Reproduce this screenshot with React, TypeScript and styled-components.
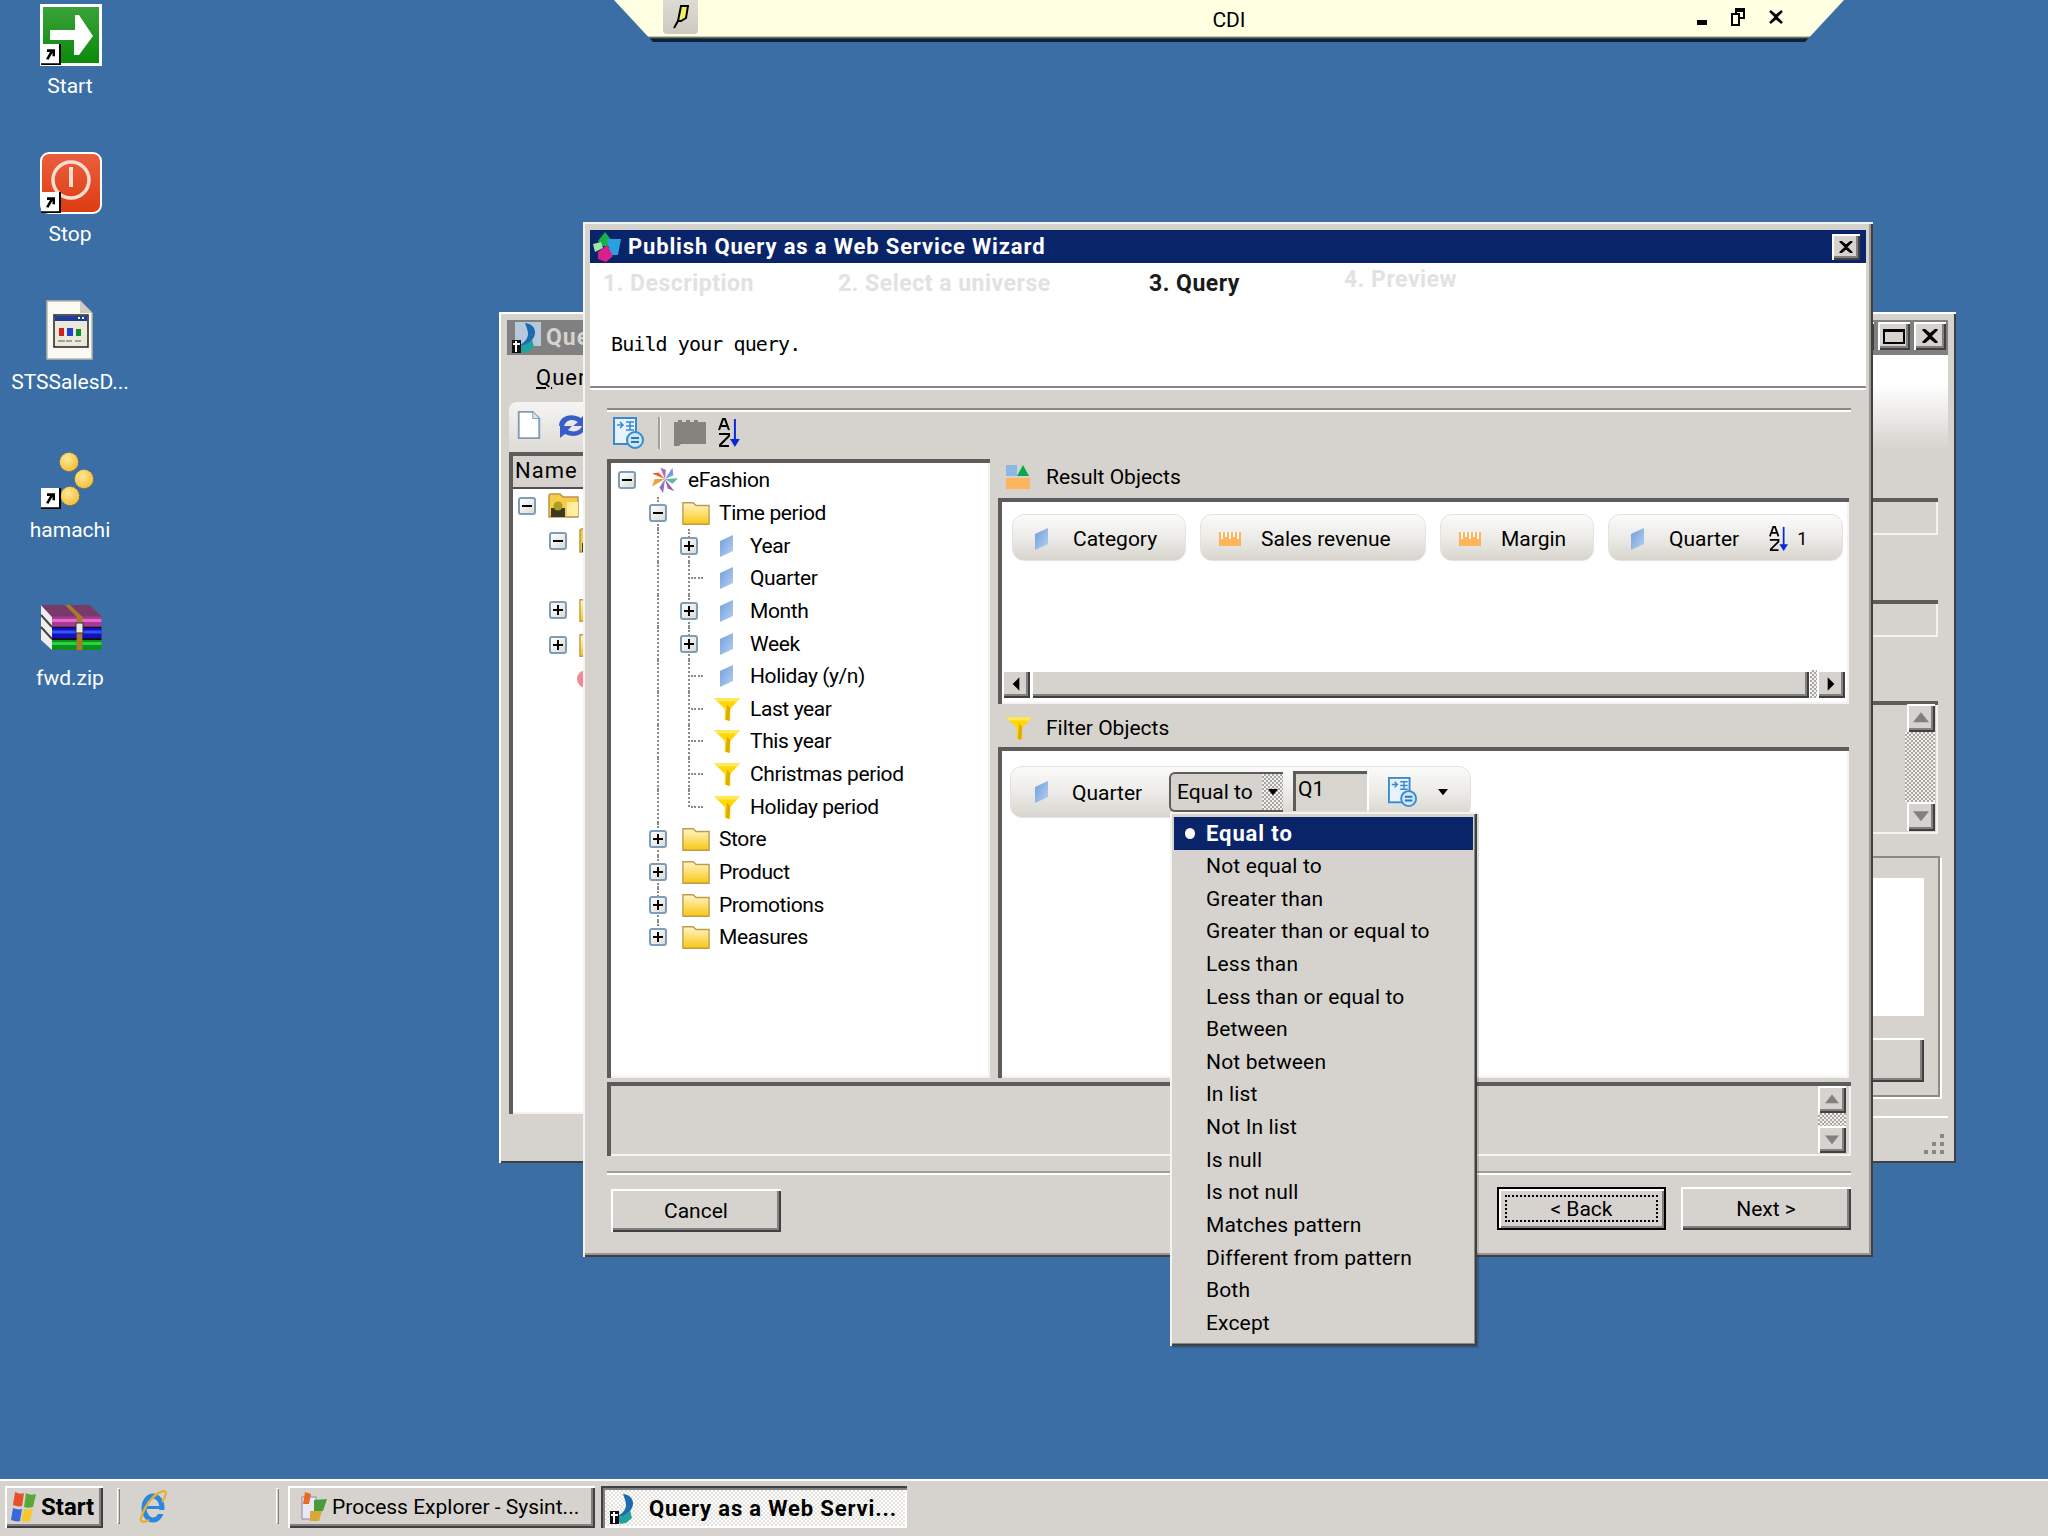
import React from "react";
import styled, { createGlobalStyle, css } from "styled-components";

const face = '#d6d3ce';
const navy = '#0a246a';
const uiFont = 'Roboto, "Liberation Sans", Arial, sans-serif';

const GlobalStyle = createGlobalStyle`
  html, body { margin: 0; padding: 0; background: #3a6ea5; }
  * { box-sizing: border-box; }
`;

const raised = css`
  background-color: ${face};
  box-shadow: inset 2px 2px 0 #fff, inset -2px -2px 0 #404040, inset -4px -4px 0 #808080;
`;
const sunken = css`
  box-shadow: inset 4px 4px 0 #5c5c5a, inset -2px -2px 0 #f4f3f0;
`;
const checker = css`
  background: repeating-conic-gradient(#a8a6a0 0 25%, #f2f1ee 0 50%) 0 0 / 4px 4px;
`;

const Desktop = styled.div`
  position: relative;
  width: 2048px;
  height: 1536px;
  overflow: hidden;
  background: #3a6ea5;
  font-family: ${uiFont};
  font-size: 21px;
  color: #000;
  display: flex;
  flex-direction: column;
`;
const IconColumn = styled.div`
  flex: 1;
  width: 140px;
  padding-top: 4px;
`;
const IconCell = styled.div`
  height: 148px;
  display: flex;
  flex-direction: column;
  align-items: center;
`;
const IconSlot = styled.div`
  position: relative;
  width: 64px;
  height: 70px;
`;
const IconLabel = styled.div`
  color: #fff;
  font-size: 21px;
  line-height: 24px;
  white-space: nowrap;
`;
const ShortcutBadge = styled.svg`
  position: absolute;
  left: 3px;
  top: 40px;
`;

/* small pale bar docked on top of the screen */
const CdiBar = styled.div`
  position: absolute;
  left: 614px;
  top: 0;
  width: 1230px;
  height: 42px;
  clip-path: polygon(0 0, 100% 0, calc(100% - 39px) 100%, 39px 100%);
  background: linear-gradient(#ffffe1 36px, #8c8c80 37px, #0e2238 39px);
  display: grid;
  grid-template-columns: 1fr auto 1fr;
  align-items: start;
`;
const PinButton = styled.div`
  margin-left: 49px;
  width: 35px;
  height: 34px;
  border-radius: 0 0 4px 4px;
  background: linear-gradient(#dddbd2, #cbc9c0);
  display: flex;
  align-items: center;
  justify-content: center;
`;
const CdiTitle = styled.div`
  font-size: 21px;
  line-height: 40px;
`;
const CdiControls = styled.div`
  display: flex;
  justify-content: flex-end;
  align-items: center;
  gap: 24px;
  height: 34px;
  padding-right: 61px;
`;
const MinimizeMark = styled.svg`
  margin-top: 10px;
`;

/* windows on the desktop */
const BackWindow = styled.div`
  position: absolute;
  left: 499px;
  top: 312px;
  width: 1457px;
  height: 851px;
  padding: 8px;
  display: flex;
  flex-direction: column;
  background: ${face};
  box-shadow: inset 2px 2px 0 #fff, inset -2px -2px 0 #404040;
`;
const BackTitle = styled.div`
  height: 35px;
  flex: none;
  background: #808080;
  color: ${face};
  font-weight: 700;
  font-size: 23px;
  letter-spacing: 1px;
  display: flex;
  align-items: center;
  gap: 3px;
  padding-left: 4px;
`;
const BackButtons = styled.div`
  margin-left: auto;
  display: flex;
  gap: 4px;
  padding: 0 2px 3px 0;
`;
const CapButton = styled.div`
  ${raised};
  width: 32px;
  height: 28px;
  display: flex;
  align-items: center;
  justify-content: center;
`;
const BackBody = styled.div`
  flex: 1;
  display: grid;
  grid-template-columns: 900px 1fr;
  min-height: 0;
`;
const BackLeft = styled.div`
  display: flex;
  flex-direction: column;
  padding-bottom: 42px;
`;
const BackMenu = styled.div`
  height: 47px;
  padding: 9px 0 0 29px;
  font-size: 22px;
  letter-spacing: 1px;
  line-height: 28px;
  u { text-decoration: underline; }
`;
const BackToolbar = styled.div`
  height: 50px;
  margin-left: 2px;
  border-radius: 8px 0 0 0;
  background: linear-gradient(#f6f5f3, #dedbd6);
  display: flex;
  align-items: center;
  gap: 14px;
  padding: 0 0 4px 8px;
`;
const BackTree = styled.div`
  flex: 1;
  margin-left: 2px;
  background: #fff;
  ${sunken};
  padding: 4px 0 0 4px;
`;
const BackHeader = styled.div`
  height: 33px;
  background: ${face};
  border-bottom: 2px solid #505050;
  padding-left: 2px;
  font-size: 22px;
  letter-spacing: 1px;
  line-height: 30px;
`;
const BackRow = styled.div<{ $depth: number }>`
  height: 34.6px;
  display: flex;
  align-items: center;
  gap: 12px;
  padding-left: ${(p) => 5 + p.$depth * 31}px;
`;
const PinkBlob = styled.svg`
  margin-left: 26px;
`;
const BackRight = styled.div`
  display: flex;
  flex-direction: column;
  padding-right: 10px;
`;
const FadePanel = styled.div`
  height: 95px;
  margin-right: -10px;
  background: linear-gradient(#fff 30%, ${face} 100%);
  flex: none;
`;
const SunkenField = styled.div<{ $gap: number }>`
  flex: none;
  height: 37px;
  margin-top: ${(p) => p.$gap}px;
  ${sunken};
`;
const ScrollPanel = styled.div`
  flex: none;
  height: 133px;
  margin-top: 64px;
  ${sunken};
  padding: 3px 3px 3px 0;
  display: flex;
  flex-direction: column;
  align-items: flex-end;
`;
const Stipple = styled.div`
  ${checker};
  flex: 1;
  width: 30px;
`;
const GroupBox = styled.div`
  flex: none;
  height: 241px;
  margin: 22px -2px 0 0;
  border: 2px solid #8c8a86;
  box-shadow: 2px 2px 0 #fff;
  padding: 20px 14px 0 0;
  display: flex;
  flex-direction: column;
`;
const WhitePane = styled.div`
  height: 138px;
  background: #fff;
`;
const GroupButton = styled.div`
  ${raised};
  height: 44px;
  margin-top: 22px;
`;
const BackRule = styled.div`
  margin: 19px -10px 0 0;
  border-top: 2px solid #fff;
`;
const Grip = styled.div`
  display: flex;
  justify-content: flex-end;
  padding: 14px 0 0 0;
  margin-right: -8px;
`;

const Wizard = styled.div`
  position: absolute;
  left: 583px;
  top: 222px;
  width: 1290px;
  height: 1035px;
  padding: 8px 7px;
  display: flex;
  flex-direction: column;
  background: ${face};
  box-shadow: inset 2px 2px 0 #f4f3f0, inset -2px -2px 0 #404040, inset -4px -4px 0 #9a9894;
`;
const TitleBar = styled.div`
  height: 33px;
  flex: none;
  background: ${navy};
  color: #fff;
  display: flex;
  align-items: center;
  padding: 0 6px 0 1px;
`;
const TitleText = styled.div`
  font-weight: 700;
  font-size: 22px;
  margin-left: 7px;
  letter-spacing: 0.85px;
`;
const CloseButton = styled.div`
  ${raised};
  margin-left: auto;
  width: 28px;
  height: 26px;
  display: flex;
  align-items: center;
  justify-content: center;
`;
const Header = styled.div`
  height: 125px;
  flex: none;
  background: #fff;
  border-bottom: 2px solid #8a8884;
  box-shadow: 0 2px 0 #fff;
`;
const Steps = styled.div`
  display: flex;
  padding: 5px 0 0 13px;
`;
const Step = styled.div<{ $w: number; $on?: boolean; $up?: boolean }>`
  width: ${(p) => p.$w}px;
  font-weight: 700;
  font-size: 23px;
  letter-spacing: 0.5px;
  line-height: 32px;
  color: ${(p) => (p.$on ? '#1a1a1a' : '#e2e2e2')};
  transform: ${(p) => (p.$up ? 'translateY(-4px)' : 'none')};
`;
const Prompt = styled.div`
  margin: 30px 0 0 21px;
  font-family: "DejaVu Sans Mono", "Liberation Mono", monospace;
  font-size: 20px;
  line-height: 28px;
  letter-spacing: -0.9px;
`;
const Body = styled.div`
  flex: 1;
  min-height: 0;
  padding: 20px 15px 0 17px;
  display: flex;
  flex-direction: column;
`;
const Etched = styled.div`
  flex: none;
  height: 4px;
  border-top: 2px solid #8c8a86;
  border-bottom: 2px solid #fff;
`;
const Toolbar = styled.div`
  flex: none;
  height: 47px;
  display: flex;
  align-items: center;
  padding: 0 0 5px 6px;
  gap: 11px;
`;
const ToolDivider = styled.div`
  width: 2px;
  height: 32px;
  margin: 0 2px;
  background: #a09e98;
  box-shadow: 1px 0 0 #fff;
`;
const MainGrid = styled.div`
  flex: none;
  height: 619px;
  display: grid;
  grid-template-columns: 383px 851px;
  column-gap: 8px;
`;
const TreePanel = styled.div`
  background: #fff;
  ${sunken};
  padding: 5px 4px;
`;
const TreeRow = styled.div<{ $depth: number }>`
  position: relative;
  height: 32.65px;
  display: flex;
  align-items: center;
  padding-left: ${(p) => 4 + p.$depth * 31}px;
`;
const Guide = styled.span<{ $depth: number; $last?: boolean }>`
  position: absolute;
  left: ${(p) => 15 + p.$depth * 31}px;
  top: 0;
  height: ${(p) => (p.$last ? '50%' : '100%')};
  border-left: 2px dotted #8a8a8a;
`;
const ToggleSlot = styled.span`
  position: relative;
  width: 36px;
  height: 18px;
  flex: none;
  display: flex;
  align-items: center;
  padding-left: 3px;
`;
const Stub = styled.span`
  position: absolute;
  left: 14px;
  top: 8px;
  width: 12px;
  border-top: 2px dotted #8a8a8a;
`;
const ToggleBox = styled.span`
  position: relative;
  z-index: 1;
  flex: none;
  width: 18px;
  height: 18px;
  background: linear-gradient(135deg, #fff, #dcdcd4);
  border: 2px solid #7f9db9;
  border-radius: 3px;
  display: flex;
  align-items: center;
  justify-content: center;
`;
const IconBox = styled.span`
  width: 28px;
  flex: none;
  display: flex;
  align-items: center;
  justify-content: center;
`;
const RowLabel = styled.span`
  margin-left: 9px;
  white-space: nowrap;
  letter-spacing: -0.4px;
`;
const RightCol = styled.div`
  display: flex;
  flex-direction: column;
`;
const SectionHead = styled.div<{ $h: number; $top?: number; $bottom?: number }>`
  height: ${(p) => p.$h}px;
  flex: none;
  display: flex;
  align-items: center;
  padding: ${(p) => p.$top ?? 0}px 0 ${(p) => p.$bottom ?? 0}px 8px;
`;
const SectionLabel = styled.span<{ $lead: number }>`
  margin-left: ${(p) => p.$lead}px;
`;
const ResultBox = styled.div`
  height: 206px;
  flex: none;
  background: #fff;
  ${sunken};
  padding: 16px 4px 6px 4px;
  display: flex;
  flex-direction: column;
`;
const ChipRow = styled.div`
  flex: 1;
  display: flex;
  gap: 14px;
  padding-left: 10px;
  align-items: flex-start;
`;
const Chip = styled.div<{ $w: number }>`
  width: ${(p) => p.$w}px;
  height: 47px;
  flex: none;
  display: flex;
  align-items: center;
  padding-top: 2px;
  border: 1px solid #e4e2dc;
  border-radius: 12px;
  background: linear-gradient(#fbfbfa 0%, #ecebe7 50%, #d8d5ce 100%);
`;
const ChipIcon = styled.span`
  width: 60px;
  flex: none;
  display: flex;
  justify-content: center;
  padding-right: 2px;
`;
const SortMark = styled.span`
  margin-left: 30px;
  display: flex;
  align-items: center;
  gap: 9px;
  font-size: 18px;
`;
const HScroll = styled.div`
  flex: none;
  height: 28px;
  display: flex;
`;
const ArrowButton = styled.div<{ $w?: number; $h?: number }>`
  ${raised};
  flex: none;
  width: ${(p) => p.$w ?? 28}px;
  height: ${(p) => p.$h ?? 28}px;
  display: flex;
  align-items: center;
  justify-content: center;
`;
const Thumb = styled.div`
  ${raised};
  flex: 1;
  margin: 0 1px;
`;
const ScrollGap = styled.div`
  ${checker};
  width: 7px;
  flex: none;
`;
const FilterBox = styled.div`
  flex: 1;
  background: #fff;
  ${sunken};
  padding: 19px 4px 4px 12px;
`;
const FilterChip = styled.div`
  width: 461px;
  height: 52px;
  display: flex;
  align-items: flex-start;
  border: 1px solid #e4e2dc;
  border-radius: 12px;
  background: linear-gradient(#fbfbfa 0%, #ecebe7 50%, #d8d5ce 100%);
`;
const FilterName = styled.span`
  width: 97px;
  flex: none;
  line-height: 52px;
`;
const FilterIcon = styled.span`
  width: 61px;
  height: 50px;
  flex: none;
  display: flex;
  align-items: center;
  justify-content: center;
`;
const SelectWrap = styled.div`
  position: relative;
  flex: none;
  width: 114px;
  height: 40px;
  margin: 5px 10px 0 0;
  display: flex;
  align-items: center;
  padding-left: 6px;
  background: ${face};
  border: 2px solid #5c5c5a;
  border-radius: 6px 0 0 6px;
  border-right-width: 0;
`;
const SelectButton = styled.span`
  ${checker};
  position: absolute;
  right: 0;
  top: 0;
  bottom: 0;
  width: 21px;
  display: flex;
  align-items: center;
  justify-content: center;
`;
const ValueInput = styled.div`
  width: 76px;
  height: 40px;
  margin-top: 4px;
  flex: none;
  padding: 0 0 0 5px;
  line-height: 36px;
  background: #d8d5ce;
  box-shadow: inset 3px 3px 0 #5c5c5a;
  border-right: 2px solid #fff;
`;
const ValueTools = styled.div`
  display: flex;
  align-items: center;
  height: 50px;
  padding-left: 19px;
  gap: 20px;
`;
const Menu = styled.div`
  position: absolute;
  z-index: 5;
  left: -1px;
  top: 38px;
  width: 307px;
  height: 534px;
  padding: 5px 4px;
  background: ${face};
  box-shadow: inset 2px 2px 0 #f4f3f0, inset -2px -2px 0 #404040, inset -3px -3px 0 #8a8884, 2px 2px 0 rgba(0, 0, 0, 0.15);
`;
const MenuItem = styled.div<{ $on?: boolean }>`
  position: relative;
  height: 32.65px;
  padding-left: 32px;
  display: flex;
  align-items: center;
  white-space: nowrap;
  letter-spacing: 0.15px;
  ${(p) =>
    p.$on &&
    css`
      background: ${navy};
      color: #fff;
      font-weight: 700;
      font-size: 22px;
      letter-spacing: 0.9px;
    `}
`;
const MenuDot = styled.span`
  position: absolute;
  left: 11px;
  top: 11px;
  width: 10px;
  height: 11px;
  border-radius: 50%;
  background: #fff;
`;
const DescPanel = styled.div`
  flex: none;
  height: 74px;
  margin-top: 4px;
  ${sunken};
  display: flex;
  flex-direction: column;
  align-items: flex-end;
  padding: 4px 5px 3px 0;
`;
const MiniStipple = styled.div`
  ${checker};
  flex: 1;
  width: 28px;
`;
const FooterRule = styled.div`
  flex: none;
  margin-top: 15px;
  height: 4px;
  border-top: 2px solid #a09e98;
  border-bottom: 2px solid #fff;
`;
const Footer = styled.div`
  flex: 1;
  display: flex;
  align-items: flex-start;
  justify-content: space-between;
  padding: 14px 0 0 4px;
`;
const FooterRight = styled.div`
  display: flex;
  gap: 15px;
  margin-top: -2px;
`;
const PushButton = styled.div<{ $focus?: boolean }>`
  ${raised};
  position: relative;
  width: ${(p) => (p.$focus ? 169 : 170)}px;
  height: 43px;
  display: flex;
  align-items: center;
  justify-content: center;
  ${(p) =>
    p.$focus &&
    css`
      border: 2px solid #000;
      box-shadow: inset 2px 2px 0 #fff, inset -2px -2px 0 #808080;
      &::after {
        content: "";
        position: absolute;
        inset: 6px;
        border: 2px dotted #000;
      }
    `}
`;

const Taskbar = styled.div`
  flex: none;
  position: relative;
  height: 57px;
  background: ${face};
  border-top: 2px solid #fff;
  padding: 5px 0 0 5px;
  display: flex;
  align-items: flex-start;
`;
const StartButton = styled.div`
  ${raised};
  width: 98px;
  height: 42px;
  display: flex;
  align-items: center;
  gap: 3px;
  padding-left: 5px;
  font-weight: 700;
  font-size: 24px;
`;
const BarDivider = styled.div<{ $gap: number }>`
  width: 3px;
  height: 36px;
  margin: 2px 0 0 ${(p) => p.$gap}px;
  background: ${face};
  box-shadow: inset 1px 1px 0 #fff, inset -1px -1px 0 #808080;
`;
const QuickLaunch = styled.div`
  width: 156px;
  height: 42px;
  padding-left: 19px;
  display: flex;
  align-items: center;
`;
const TaskButton = styled.div<{ $active?: boolean }>`
  width: ${(p) => (p.$active ? 306 : 307)}px;
  height: 42px;
  margin-left: ${(p) => (p.$active ? 6 : 9)}px;
  display: flex;
  align-items: center;
  gap: ${(p) => (p.$active ? 8 : 4)}px;
  padding-left: 8px;
  white-space: nowrap;
  ${(p) =>
    p.$active
      ? css`
          font-weight: 700;
          font-size: 22px;
          letter-spacing: 0.85px;
          padding-top: 3px;
          background: repeating-conic-gradient(#fff 0 25%, #e4e2dc 0 50%) 0 0 / 4px 4px;
          box-shadow: inset 2px 2px 0 #404040, inset 4px 4px 0 #808080, inset -2px -2px 0 #fff;
        `
      : raised}
`;

/* drawings */
const ShortcutArrow = () => (
  <ShortcutBadge width="20" height="21" viewBox="0 0 20 24" preserveAspectRatio="none">
    <rect width="20" height="24" fill="#000" />
    <rect x="0" y="0" width="18" height="22" fill="#fff" />
    <path d="M6 6h8v8h-2.5v-4l-4 8-2.5-1 4-8H6z" fill="#000" />
  </ShortcutBadge>
);
const StartIcon = () => (
  <svg width="64" height="64" viewBox="0 0 64 64">
    <defs>
      <linearGradient id="startG" x1="0" y1="0" x2="0" y2="1">
        <stop offset="0" stopColor="#3aa23a" />
        <stop offset="1" stopColor="#0a8a0a" />
      </linearGradient>
    </defs>
    <rect x="2" y="0" width="62" height="62" fill="#fff" />
    <rect x="5" y="3" width="56" height="56" fill="url(#startG)" />
    <path d="M12 26h25V11h4l14 21-14 19h-5V36H12z" fill="#fff" />
  </svg>
);
const StopIcon = () => (
  <svg width="64" height="64" viewBox="0 0 64 64">
    <defs>
      <linearGradient id="stopG" x1="0" y1="0" x2="0" y2="1">
        <stop offset="0" stopColor="#ea5f3e" />
        <stop offset="1" stopColor="#dd3c10" />
      </linearGradient>
    </defs>
    <rect x="3" y="1" width="60" height="60" rx="8" fill="url(#stopG)" stroke="#fff" strokeWidth="2" />
    <circle cx="33" cy="28" r="18" fill="none" stroke="#f6ddd4" strokeWidth="3.5" />
    <rect x="31" y="15" width="4" height="20" fill="#f6ddd4" />
  </svg>
);
const DocIcon = () => (
  <svg width="64" height="64" viewBox="0 0 64 64">
    <path d="M9 1h33l12 12v46H9z" fill="#fbfaf2" stroke="#b8b6aa" strokeWidth="1.5" />
    <path d="M42 1v12h12z" fill="#cfccc4" />
    <rect x="16" y="15" width="34" height="32" fill="#ece9d8" stroke="#222" strokeWidth="1.5" />
    <rect x="17" y="16" width="32" height="5" fill="#1f3c9a" />
    <path d="M40 18h2M44 18h2" stroke="#fff" strokeWidth="2" />
    <rect x="21" y="28" width="5" height="8" fill="#d02020" />
    <rect x="29" y="28" width="6" height="8" fill="#2040d8" />
    <rect x="38" y="29" width="5" height="7" fill="#108a30" />
    <path d="M20 41h7M28 41h6M37 41h6" stroke="#888" strokeWidth="1.5" />
  </svg>
);
const Ball = ({ x, y }: { x: number; y: number }) => (
  <circle cx={x} cy={y} r="9.5" fill="url(#ballG)" stroke="#6a6a58" strokeWidth="1" strokeDasharray="2 1.5" />
);
const HamachiIcon = () => (
  <svg width="64" height="64" viewBox="0 0 64 64">
    <defs>
      <radialGradient id="ballG" cx="0.4" cy="0.35" r="0.8">
        <stop offset="0" stopColor="#ffe89a" />
        <stop offset="1" stopColor="#f2b51e" />
      </radialGradient>
    </defs>
    <Ball x={31} y={14} />
    <Ball x={46} y={31} />
    <Ball x={32} y={48} />
  </svg>
);
const RarIcon = () => (
  <svg width="64" height="64" viewBox="0 0 64 64">
    <path d="M3 9l11 12v33L3 44z" fill="#efeeec" />
    <path d="M3 19l11 12M3 31l11 12" stroke="#444" strokeWidth="2" />
    <path d="M3 9h49l11.5 11.7H14z" fill="#7a3a68" />
    <rect x="14" y="20.7" width="49.5" height="10" fill="#a8389a" />
    <rect x="14" y="23" width="49.5" height="3" fill="#e868c8" />
    <rect x="14" y="30.7" width="49.5" height="1.6" fill="#111" />
    <rect x="14" y="32" width="49.5" height="10" fill="#1212c4" />
    <rect x="14" y="34.5" width="49.5" height="3" fill="#3a54f2" />
    <rect x="14" y="42" width="49.5" height="2" fill="#111" />
    <rect x="14" y="44" width="49.5" height="10" fill="#0f8f1f" />
    <rect x="14" y="46" width="49.5" height="3" fill="#22d83a" />
    <path d="M27 9h5l12.4 11.7v33.3h-5.8V20.7z" fill="#a97a2a" />
    <rect x="38" y="27" width="7" height="10" fill="#e8e8e8" stroke="#333" strokeWidth="1" />
  </svg>
);
const WizardLogo = () => (
  <svg width="30" height="30" viewBox="0 0 30 30">
    <path d="M14 0l-7 9 3 5h8l3-5z" fill="#18b048" />
    <path d="M2 12l8-2 2 6-8 4z" fill="#9be8a8" />
    <path d="M16 7h14l-3 16h-8z" fill="#2aa0e0" />
    <path d="M7 20l9-7 6 11-7 6-8-3z" fill="#d8208c" />
  </svg>
);
const QueryWinIcon = ({ size = 32, dim = false }: { size?: number; dim?: boolean }) => (
  <svg width={size} height={size} viewBox="0 0 32 32">
    {dim && <rect x="4" y="0" width="26" height="24" fill="#b8c8dc" />}
    <path d="M14 1c10 1 13 10 7 17-4 5-9 6-14 6 6-3 10-7 10-12 0-4-2-8-3-11z" fill="#1c6ab0" />
    <path d="M8 24c6-1 11-3 13-7l2 8-6 5-6 1z" fill="#23a0a0" />
    <rect x="1" y="18" width="9" height="13" fill="#101010" />
    <path d="M2 22h7M5 19v11" stroke="#fff" strokeWidth="2" />
  </svg>
);
const FolderIcon = ({ size = 30 }: { size?: number }) => (
  <svg width={size} height={size} viewBox="0 0 30 26">
    <defs>
      <linearGradient id="foldG" x1="0" y1="0" x2="0" y2="1">
        <stop offset="0" stopColor="#fff6c8" />
        <stop offset="1" stopColor="#f8c814" />
      </linearGradient>
    </defs>
    <path d="M1 25V2h11l3 3h14v20z" fill="url(#foldG)" stroke="#c09a50" strokeWidth="1.5" />
  </svg>
);
const SharedFolderIcon = () => (
  <svg width="32" height="26" viewBox="0 0 32 26">
    <path d="M1 24V3c0-1 1-2 2-2h9l3 3h15v20z" fill="#f8cc48" stroke="#b8954e" strokeWidth="1.5" />
    <rect x="19" y="9" width="11" height="14" fill="#fdeea0" />
    <path d="M3 15h14v9H3z" fill="#3a3a20" />
    <circle cx="10" cy="13" r="4.5" fill="#a8a020" />
  </svg>
);
const DimIcon = () => (
  <svg width="16" height="24" viewBox="0 0 16 24">
    <defs>
      <linearGradient id="dimG" x1="0" y1="0" x2="1" y2="1">
        <stop offset="0" stopColor="#6f9edc" />
        <stop offset="1" stopColor="#b8d0f0" />
      </linearGradient>
    </defs>
    <path d="M1 7L14 1v16L1 23z" fill="url(#dimG)" />
  </svg>
);
const FunnelIcon = ({ size = 26 }: { size?: number }) => (
  <svg width={size} height={size} viewBox="0 0 24 24">
    <path d="M0 2h24L15 12v11l-5 -1V12z" fill="#ffd800" />
    <path d="M0 2h24l-3 3H3z" fill="#ffe860" />
    <path d="M12 8l3 3-1 12-3-1z" fill="#e0a800" />
  </svg>
);
const MeasureIcon = () => (
  <svg width="22" height="14" viewBox="0 0 22 14">
    <rect y="0" width="22" height="14" fill="#fdb45c" />
    <path d="M3 0v7M7 0v5M11 0v7M15 0v5M19 0v7" stroke="#fff" strokeWidth="2" />
  </svg>
);
const SparkIcon = () => (
  <svg width="30" height="30" viewBox="0 0 30 30">
    <path d="M15 14L10 2l6 2z" fill="#b070c0" />
    <path d="M15 14l8-12 1 8z" fill="#7a9ad8" />
    <path d="M15 14l14-1-6 6z" fill="#60b8a0" />
    <path d="M15 14l10 13-7-3z" fill="#a05ab0" />
    <path d="M15 14l-2 15-4-6z" fill="#9070c0" />
    <path d="M15 14L1 22l3-8z" fill="#f0a040" />
    <path d="M15 14L1 8l7-1z" fill="#e06040" />
  </svg>
);
const ResultIcon = () => (
  <svg width="24" height="26" viewBox="0 0 24 26">
    <rect x="0" y="1" width="11" height="11" fill="#8cb8e8" />
    <path d="M17 1l6 11H11z" fill="#0aa84a" />
    <rect x="0" y="14" width="24" height="11" fill="#fdb45c" />
  </svg>
);
const QueryDocIcon = ({ size = 32 }: { size?: number }) => (
  <svg width={size} height={size} viewBox="0 0 32 32">
    <rect x="1" y="1" width="22" height="26" fill="#e8f2fc" stroke="#3a8ad0" strokeWidth="2" />
    <path d="M4 8h6M7 5l3 3-3 3" stroke="#3a8ad0" strokeWidth="1.5" fill="none" />
    <path d="M13 5h8M13 9h8M13 13h8M17 5v8" stroke="#3a8ad0" strokeWidth="1.5" />
    <circle cx="22" cy="23" r="8" fill="#cfe6f8" stroke="#3a8ad0" strokeWidth="2" />
    <path d="M18 21h8M18 25h8" stroke="#2a7ac0" strokeWidth="2" />
  </svg>
);
const NoteIcon = () => (
  <svg width="34" height="28" viewBox="0 0 34 28">
    <path d="M1 3h4V1h4v2h4V1h4v2h4V1h4v2h8v22H8l-2 2H1z" fill="#858280" />
  </svg>
);
const SortIcon = ({ height = 30 }: { height?: number }) => (
  <svg width={height * 0.73} height={height} viewBox="0 0 22 30">
    <path d="M1 12L5 1h2l4 11M3 8h6" stroke="#000" strokeWidth="2" fill="none" />
    <path d="M1 16h10v2L2 27v1h9" stroke="#000" strokeWidth="2" fill="none" />
    <path d="M17 1v22" stroke="#0a28d8" strokeWidth="2" />
    <path d="M12 21h10l-5 8z" fill="#0a28d8" />
  </svg>
);
const Triangle = ({ dir, color = '#000', size = 10 }: { dir: 'l' | 'r' | 'u' | 'd'; color?: string; size?: number }) => {
  const pts = { l: '10,0 10,16 2,8', r: '2,0 2,16 10,8', u: '0,12 16,12 8,2', d: '0,3 16,3 8,13' }[dir];
  const box = dir === 'l' || dir === 'r' ? '0 0 12 16' : '0 0 16 16';
  return (
    <svg width={size} height={size * 1.4} viewBox={box}>
      <polygon points={pts} fill={color} />
    </svg>
  );
};
const CloseX = ({ w = 14, h = 12 }: { w?: number; h?: number }) => (
  <svg width={w} height={h} viewBox="0 0 14 12">
    <path d="M1 0l6 5 6-5M1 12l6-5 6 5M1 0l12 12M13 0L1 12" stroke="#000" strokeWidth="2.4" fill="none" />
  </svg>
);
const PlusMinus = ({ plus }: { plus: boolean }) => (
  <svg width="10" height="10" viewBox="0 0 10 10">
    <path d={plus ? 'M0 5h10M5 0v10' : 'M0 5h10'} stroke="#000" strokeWidth="2" />
  </svg>
);
const WindowsFlag = () => (
  <svg width="28" height="32" viewBox="0 0 28 32">
    <path d="M5 1c4 2 7 2 9 1l-2 13c-3 1-6 0-9-1z" fill="#e8502a" />
    <path d="M16 2c3 2 7 2 10 1l-3 13c-3 1-6 1-9 0z" fill="#58a838" />
    <path d="M3 17c3 1 6 2 9 1l-2 12c-3 1-6 0-9-1z" fill="#3a68d8" />
    <path d="M14 18c3 1 6 1 9 0l-3 12c-3 1-6 1-9 0z" fill="#f8c828" />
  </svg>
);
const IeIcon = () => (
  <svg width="28" height="34" viewBox="0 0 28 34">
    <ellipse cx="14" cy="18" rx="9" ry="12" fill="none" stroke="#2a88e0" strokeWidth="5" />
    <rect x="5" y="16" width="19" height="3" fill="#2a88e0" />
    <rect x="14" y="20" width="12" height="4" fill={face} />
    <path d="M26 1C18 1 7 12 2 28c-1 4 3 5 8 2" stroke="#e8b030" strokeWidth="2.5" fill="none" />
    <path d="M26 1c2 2-1 8-3 11" stroke="#e8b030" strokeWidth="2" fill="none" />
  </svg>
);
const ProcExpIcon = () => (
  <svg width="32" height="32" viewBox="0 0 32 32">
    <rect x="6" y="6" width="14" height="22" fill="#e8e8f4" stroke="#8a8aa0" />
    <path d="M18 9l13-1-4 12H18z" fill="#4a9a3a" />
    <path d="M9 1l6 2-2 10H7z" fill="#e86a2a" />
    <path d="M14 20h12l-3 10h-9z" fill="#d8a838" />
  </svg>
);
const PinIcon = () => (
  <svg width="16" height="24" viewBox="0 0 16 24">
    <path d="M8 1h7l-2 12-5 3H5z" fill="#f0f060" stroke="#000" strokeWidth="2" />
    <path d="M5 16L1 23" stroke="#000" strokeWidth="2" />
  </svg>
);
const RestoreIcon = () => (
  <svg width="14" height="18" viewBox="0 0 14 18">
    <rect x="5" y="1" width="8" height="9" fill="none" stroke="#000" strokeWidth="2" />
    <rect x="1" y="6" width="7" height="11" fill="#ffffe1" stroke="#000" strokeWidth="2" />
    <rect x="5" y="1" width="8" height="3" fill="#000" />
  </svg>
);
const GripIcon = () => (
  <svg width="24" height="24" viewBox="0 0 24 24">
    {[[18, 2], [10, 10], [18, 10], [2, 18], [10, 18], [18, 18]].map(([x, y]) => (
      <rect key={`${x}-${y}`} x={x} y={y} width="4" height="4" fill="#8a8884" />
    ))}
  </svg>
);

type Node = { label: string; depth: number; toggle?: 'plus' | 'minus'; icon: 'spark' | 'folder' | 'dim' | 'filter'; last?: boolean; lastChild?: boolean };

const treeNodes: Node[] = [
  { label: 'eFashion', depth: 0, toggle: 'minus', icon: 'spark' },
  { label: 'Time period', depth: 1, toggle: 'minus', icon: 'folder' },
  { label: 'Year', depth: 2, toggle: 'plus', icon: 'dim' },
  { label: 'Quarter', depth: 2, icon: 'dim' },
  { label: 'Month', depth: 2, toggle: 'plus', icon: 'dim' },
  { label: 'Week', depth: 2, toggle: 'plus', icon: 'dim' },
  { label: 'Holiday (y/n)', depth: 2, icon: 'dim' },
  { label: 'Last year', depth: 2, icon: 'filter' },
  { label: 'This year', depth: 2, icon: 'filter' },
  { label: 'Christmas period', depth: 2, icon: 'filter' },
  { label: 'Holiday period', depth: 2, icon: 'filter', lastChild: true },
  { label: 'Store', depth: 1, toggle: 'plus', icon: 'folder' },
  { label: 'Product', depth: 1, toggle: 'plus', icon: 'folder' },
  { label: 'Promotions', depth: 1, toggle: 'plus', icon: 'folder' },
  { label: 'Measures', depth: 1, toggle: 'plus', icon: 'folder', last: true },
];

const operators = [
  'Equal to', 'Not equal to', 'Greater than', 'Greater than or equal to', 'Less than', 'Less than or equal to',
  'Between', 'Not between', 'In list', 'Not In list', 'Is null', 'Is not null', 'Matches pattern',
  'Different from pattern', 'Both', 'Except',
];

const chips = [
  { label: 'Category', w: 174, icon: <DimIcon /> },
  { label: 'Sales revenue', w: 226, icon: <MeasureIcon /> },
  { label: 'Margin', w: 154, icon: <MeasureIcon /> },
];

const nodeIcon = (n: Node) => {
  if (n.icon === 'spark') return <SparkIcon />;
  if (n.icon === 'folder') return <FolderIcon />;
  if (n.icon === 'dim') return <DimIcon />;
  return <FunnelIcon />;
};

const desktopItems = [
  { label: 'Start', icon: <StartIcon />, link: true },
  { label: 'Stop', icon: <StopIcon />, link: true },
  { label: 'STSSalesD...', icon: <DocIcon /> },
  { label: 'hamachi', icon: <HamachiIcon />, link: true },
  { label: 'fwd.zip', icon: <RarIcon /> },
];

export default function App() {
  return (
    <Desktop>
      <GlobalStyle />
      <IconColumn>
        {desktopItems.map((item) => (
          <IconCell key={item.label}>
            <IconSlot>
              {item.icon}
              {item.link && <ShortcutArrow />}
            </IconSlot>
            <IconLabel>{item.label}</IconLabel>
          </IconCell>
        ))}
      </IconColumn>

      <CdiBar>
        <PinButton>
          <PinIcon />
        </PinButton>
        <CdiTitle>CDI</CdiTitle>
        <CdiControls>
          <MinimizeMark width="10" height="5" viewBox="0 0 10 5"><rect width="10" height="5" /></MinimizeMark>
          <RestoreIcon />
          <CloseX w={14} h={14} />
        </CdiControls>
      </CdiBar>

      <BackWindow>
        <BackTitle>
          <QueryWinIcon size={32} dim />
          Que
          <BackButtons>
            <CapButton />
            <CapButton>
              <svg width="22" height="16" viewBox="0 0 22 16"><rect x="1" y="2" width="20" height="13" fill="none" stroke="#000" strokeWidth="2" /><rect x="1" y="1" width="20" height="3" /></svg>
            </CapButton>
            <CapButton>
              <CloseX w={20} h={14} />
            </CapButton>
          </BackButtons>
        </BackTitle>
        <BackBody>
          <BackLeft>
            <BackMenu>
              <u>Q</u>uery
            </BackMenu>
            <BackToolbar>
              <svg width="24" height="28" viewBox="0 0 24 30"><path d="M1 1h15l7 7v21H1z" fill="#fff" stroke="#7f9db9" strokeWidth="2" /><path d="M16 1v7h7" fill="#d8e4f0" stroke="#7f9db9" /></svg>
              <svg width="34" height="30" viewBox="0 0 34 30"><path d="M4 16C4 6 16 2 26 8l4-4v12H18l5-4c-6-4-12-2-14 4zM30 16c0 10-12 12-20 8l-5 4V16h12l-4 4c6 3 12 1 14-4z" fill="#3a5ec8" /></svg>
            </BackToolbar>
            <BackTree>
              <BackHeader>Name</BackHeader>
              <BackRow $depth={0}>
                <ToggleBox><PlusMinus plus={false} /></ToggleBox>
                <SharedFolderIcon />
              </BackRow>
              <BackRow $depth={1}>
                <ToggleBox><PlusMinus plus={false} /></ToggleBox>
                <SharedFolderIcon />
              </BackRow>
              <BackRow $depth={1} />
              <BackRow $depth={1}>
                <ToggleBox><PlusMinus plus /></ToggleBox>
                <FolderIcon size={28} />
              </BackRow>
              <BackRow $depth={1}>
                <ToggleBox><PlusMinus plus /></ToggleBox>
                <FolderIcon size={28} />
              </BackRow>
              <BackRow $depth={1}>
                <PinkBlob width="22" height="22" viewBox="0 0 22 22"><circle cx="11" cy="11" r="9" fill="#f08a98" /></PinkBlob>
              </BackRow>
            </BackTree>
          </BackLeft>
          <BackRight>
            <FadePanel />
            <SunkenField $gap={48} />
            <SunkenField $gap={65} />
            <ScrollPanel>
              <ArrowButton $h={28}><Triangle dir="u" color="#808080" size={16} /></ArrowButton>
              <Stipple />
              <ArrowButton $h={29}><Triangle dir="d" color="#808080" size={16} /></ArrowButton>
            </ScrollPanel>
            <GroupBox>
              <WhitePane />
              <GroupButton />
            </GroupBox>
            <BackRule />
            <Grip><GripIcon /></Grip>
          </BackRight>
        </BackBody>
      </BackWindow>

      <Wizard>
        <TitleBar>
          <WizardLogo />
          <TitleText>Publish Query as a Web Service Wizard</TitleText>
          <CloseButton><CloseX /></CloseButton>
        </TitleBar>
        <Header>
          <Steps>
            <Step $w={235}>1. Description</Step>
            <Step $w={311}>2. Select a universe</Step>
            <Step $w={195} $on>3. Query</Step>
            <Step $w={200} $up>4. Preview</Step>
          </Steps>
          <Prompt>Build your query.</Prompt>
        </Header>
        <Body>
          <Etched />
          <Toolbar>
            <QueryDocIcon />
            <ToolDivider />
            <NoteIcon />
            <SortIcon />
          </Toolbar>
          <MainGrid>
            <TreePanel>
              {treeNodes.map((n) => (
                <TreeRow key={n.label} $depth={n.depth}>
                  {n.depth >= 1 && <Guide $depth={1} $last={n.last} />}
                  {n.depth === 2 && <Guide $depth={2} $last={n.lastChild} />}
                  <ToggleSlot>
                    {n.toggle ? (
                      <ToggleBox><PlusMinus plus={n.toggle === 'plus'} /></ToggleBox>
                    ) : (
                      <Stub />
                    )}
                  </ToggleSlot>
                  <IconBox>{nodeIcon(n)}</IconBox>
                  <RowLabel>{n.label}</RowLabel>
                </TreeRow>
              ))}
            </TreePanel>
            <RightCol>
              <SectionHead $h={39} $bottom={3}>
                <ResultIcon />
                <SectionLabel $lead={16}>Result Objects</SectionLabel>
              </SectionHead>
              <ResultBox>
                <ChipRow>
                  {chips.map((c) => (
                    <Chip key={c.label} $w={c.w}>
                      <ChipIcon>{c.icon}</ChipIcon>
                      {c.label}
                    </Chip>
                  ))}
                  <Chip $w={235}>
                    <ChipIcon><DimIcon /></ChipIcon>
                    Quarter
                    <SortMark><SortIcon height={26} />1</SortMark>
                  </Chip>
                </ChipRow>
                <HScroll>
                  <ArrowButton><Triangle dir="l" /></ArrowButton>
                  <Thumb />
                  <ScrollGap />
                  <ArrowButton><Triangle dir="r" /></ArrowButton>
                </HScroll>
              </ResultBox>
              <SectionHead $h={43} $top={4}>
                <FunnelIcon />
                <SectionLabel $lead={14}>Filter Objects</SectionLabel>
              </SectionHead>
              <FilterBox>
                <FilterChip>
                  <FilterIcon><DimIcon /></FilterIcon>
                  <FilterName>Quarter</FilterName>
                  <SelectWrap>
                    Equal to
                    <SelectButton><Triangle dir="d" size={10} /></SelectButton>
                    <Menu>
                      {operators.map((op, i) => (
                        <MenuItem key={op} $on={i === 0}>
                          {i === 0 && <MenuDot />}
                          {op}
                        </MenuItem>
                      ))}
                    </Menu>
                  </SelectWrap>
                  <ValueInput>Q1</ValueInput>
                  <ValueTools>
                    <QueryDocIcon size={30} />
                    <Triangle dir="d" size={10} />
                  </ValueTools>
                </FilterChip>
              </FilterBox>
            </RightCol>
          </MainGrid>
          <DescPanel>
            <ArrowButton $h={27}><Triangle dir="u" color="#808080" size={14} /></ArrowButton>
            <MiniStipple />
            <ArrowButton $h={27}><Triangle dir="d" color="#808080" size={14} /></ArrowButton>
          </DescPanel>
          <FooterRule />
          <Footer>
            <PushButton>Cancel</PushButton>
            <FooterRight>
              <PushButton $focus>&lt; Back</PushButton>
              <PushButton>Next &gt;</PushButton>
            </FooterRight>
          </Footer>
        </Body>
      </Wizard>

      <Taskbar>
        <StartButton>
          <WindowsFlag />
          Start
        </StartButton>
        <BarDivider $gap={14} />
        <QuickLaunch><IeIcon /></QuickLaunch>
        <BarDivider $gap={0} />
        <TaskButton>
          <ProcExpIcon />
          Process Explorer - Sysint...
        </TaskButton>
        <TaskButton $active>
          <QueryWinIcon size={32} />
          Query as a Web Servi...
        </TaskButton>
      </Taskbar>
    </Desktop>
  );
}
